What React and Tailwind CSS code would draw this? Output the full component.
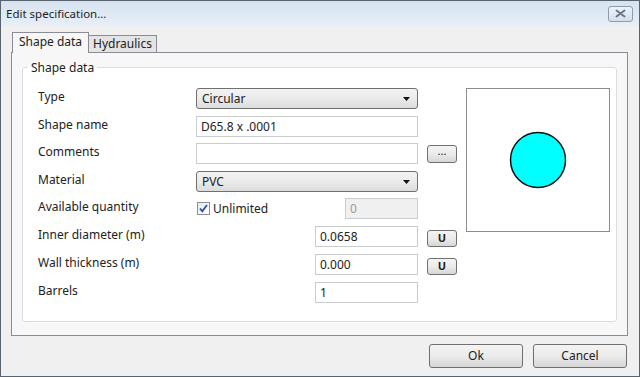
import React from 'react';

const font = { fontFamily: '"Noto Sans", "DejaVu Sans", sans-serif' };

function Btn({ children, className = '' }) {
  return (
    <div className={`flex items-center justify-center rounded-[3px] border border-[#707070] bg-gradient-to-b from-[#f4f4f4] via-[#ebebeb] to-[#d6d6d6] text-[#222] ${className}`}>
      {children}
    </div>
  );
}

function Select({ value }) {
  return (
    <div className="flex h-[21px] w-[222px] items-center justify-between rounded-[3px] border border-[#707070] bg-gradient-to-b from-[#f3f3f3] via-[#ebebeb] to-[#dcdcdc] pl-[5px] pr-[7px] text-[12px] text-[#222]">
      <span>{value}</span>
      <svg width="7" height="4" viewBox="0 0 7 4"><path d="M0 0h7L3.5 4z" fill="#111" /></svg>
    </div>
  );
}

function Input({ value = '', className = 'w-[222px]', disabled = false }) {
  return (
    <div className={`flex h-[21px] items-center border border-[#c9cdd2] pl-[4px] text-[12px] ${disabled ? 'bg-[#f0f0f0] text-[#9a9a9a]' : 'bg-white text-[#222]'} ${className}`}>
      {value}
    </div>
  );
}

function Label({ children }) {
  return <div className="w-[158px] shrink-0 pb-[3px] text-[12px] text-[#222]">{children}</div>;
}

export default function App() {
  return (
    <div style={font} className="flex h-[377px] w-[640px] flex-col overflow-hidden border border-[#5a6470] bg-[#f0f0f0]">
      {/* barra de título */}
      <div className="flex h-[25px] shrink-0 items-center justify-between bg-gradient-to-b from-[#d7e3f0] to-[#e7eef7] pl-[5px] pr-[6px]">
        <span className="text-[11.5px] text-[#1e1e1e]">Edit specification...</span>
        <div className="flex h-[16px] w-[25px] items-center justify-center rounded-[3px] border border-[#8a9cb2] bg-gradient-to-b from-[#eef3f9] to-[#d5dfeb]">
          <svg width="11" height="9" viewBox="0 0 11 9">
            <path d="M1.5 1.5l8 6M9.5 1.5l-8 6" stroke="#6b7480" strokeWidth="2" strokeLinecap="round" />
          </svg>
        </div>
      </div>

      <div className="flex flex-1 flex-col pl-[10px] pr-[11px] pt-[6px]">
        {/* abas */}
        <div className="flex h-[20px] items-end pl-px">
          <div className="relative z-10 -mb-px flex h-[21px] w-[77px] items-center justify-center border border-b-0 border-[#898c95] bg-[#f7f7f7] pb-[2px] text-[12px] text-[#222]">
            Shape data
          </div>
          <div className="flex h-[17px] w-[68px] items-center justify-center border border-b-0 border-l-0 border-[#898c95] bg-[#e4e4e4] text-[12px] text-[#222]">
            Hydraulics
          </div>
        </div>

        {/* painel */}
        <div className="h-[284px] border border-[#898c95] bg-[#f7f7f7] px-[10px] pt-[7px]">
          <fieldset className="h-[262px] rounded-[3px] border border-[#dcdcdc] bg-white pl-[15px] pr-[6px] pt-[13px]">
            <legend className="-ml-[10px] px-[3px] text-[12px] leading-[15px] text-[#222]">Shape data</legend>
            <div className="flex">
              <div className="flex w-[420px] flex-col">
                <div className="flex h-[21px] items-center">
                  <Label>Type</Label>
                  <Select value="Circular" />
                </div>
                <div className="mt-[7px] flex h-[21px] items-center">
                  <Label>Shape name</Label>
                  <Input value="D65.8 x .0001" />
                </div>
                <div className="mt-[6px] flex h-[21px] items-center">
                  <Label>Comments</Label>
                  <Input />
                  <Btn className="ml-[9px] h-[18px] w-[30px] pb-[4px] text-[11px]">...</Btn>
                </div>
                <div className="mt-[7px] flex h-[21px] items-center">
                  <Label>Material</Label>
                  <Select value="PVC" />
                </div>
                <div className="mt-[6px] flex h-[21px] items-center">
                  <Label>Available quantity</Label>
                  <div className="flex w-[149px] items-center">
                    <div className="ml-px flex h-[13px] w-[13px] items-center justify-center border border-[#8f8f8f] bg-gradient-to-br from-[#e3e9f2] to-[#ffffff]">
                      <svg width="9" height="9" viewBox="0 0 9 9">
                        <path d="M1 4.5l2.3 2.8L8 1" fill="none" stroke="#2d4f9e" strokeWidth="1.8" />
                      </svg>
                    </div>
                    <span className="ml-[3px] text-[12px] text-[#222]">Unlimited</span>
                  </div>
                  <Input value="0" disabled className="w-[73px]" />
                </div>
                <div className="mt-[7px] flex h-[21px] items-center">
                  <Label>Inner diameter (m)</Label>
                  <div className="w-[119px]" />
                  <Input value="0.0658" className="w-[103px]" />
                  <Btn className="ml-[9px] mt-[3px] h-[17px] w-[30px] text-[11px] font-bold">U</Btn>
                </div>
                <div className="mt-[7px] flex h-[21px] items-center">
                  <Label>Wall thickness (m)</Label>
                  <div className="w-[119px]" />
                  <Input value="0.000" className="w-[103px]" />
                  <Btn className="ml-[9px] mt-[3px] h-[17px] w-[30px] text-[11px] font-bold">U</Btn>
                </div>
                <div className="mt-[7px] flex h-[21px] items-center">
                  <Label>Barrels</Label>
                  <div className="w-[119px]" />
                  <Input value="1" className="w-[103px]" />
                </div>
              </div>

              {/* pré-visualização */}
              <div className="ml-[8px] flex h-[144px] w-[144px] items-center justify-center border border-[#8c8c8c] bg-white">
                <svg width="60" height="60" viewBox="0 0 60 60">
                  <circle cx="30" cy="30" r="27.5" fill="#00ffff" stroke="#111" strokeWidth="1.5" />
                </svg>
              </div>
            </div>
          </fieldset>
        </div>

        {/* botões */}
        <div className="mt-[8px] flex justify-end gap-[10px] pr-px">
          <Btn className="h-[24px] w-[94px] text-[12px]">Ok</Btn>
          <Btn className="h-[24px] w-[94px] text-[12px]">Cancel</Btn>
        </div>
      </div>
    </div>
  );
}
